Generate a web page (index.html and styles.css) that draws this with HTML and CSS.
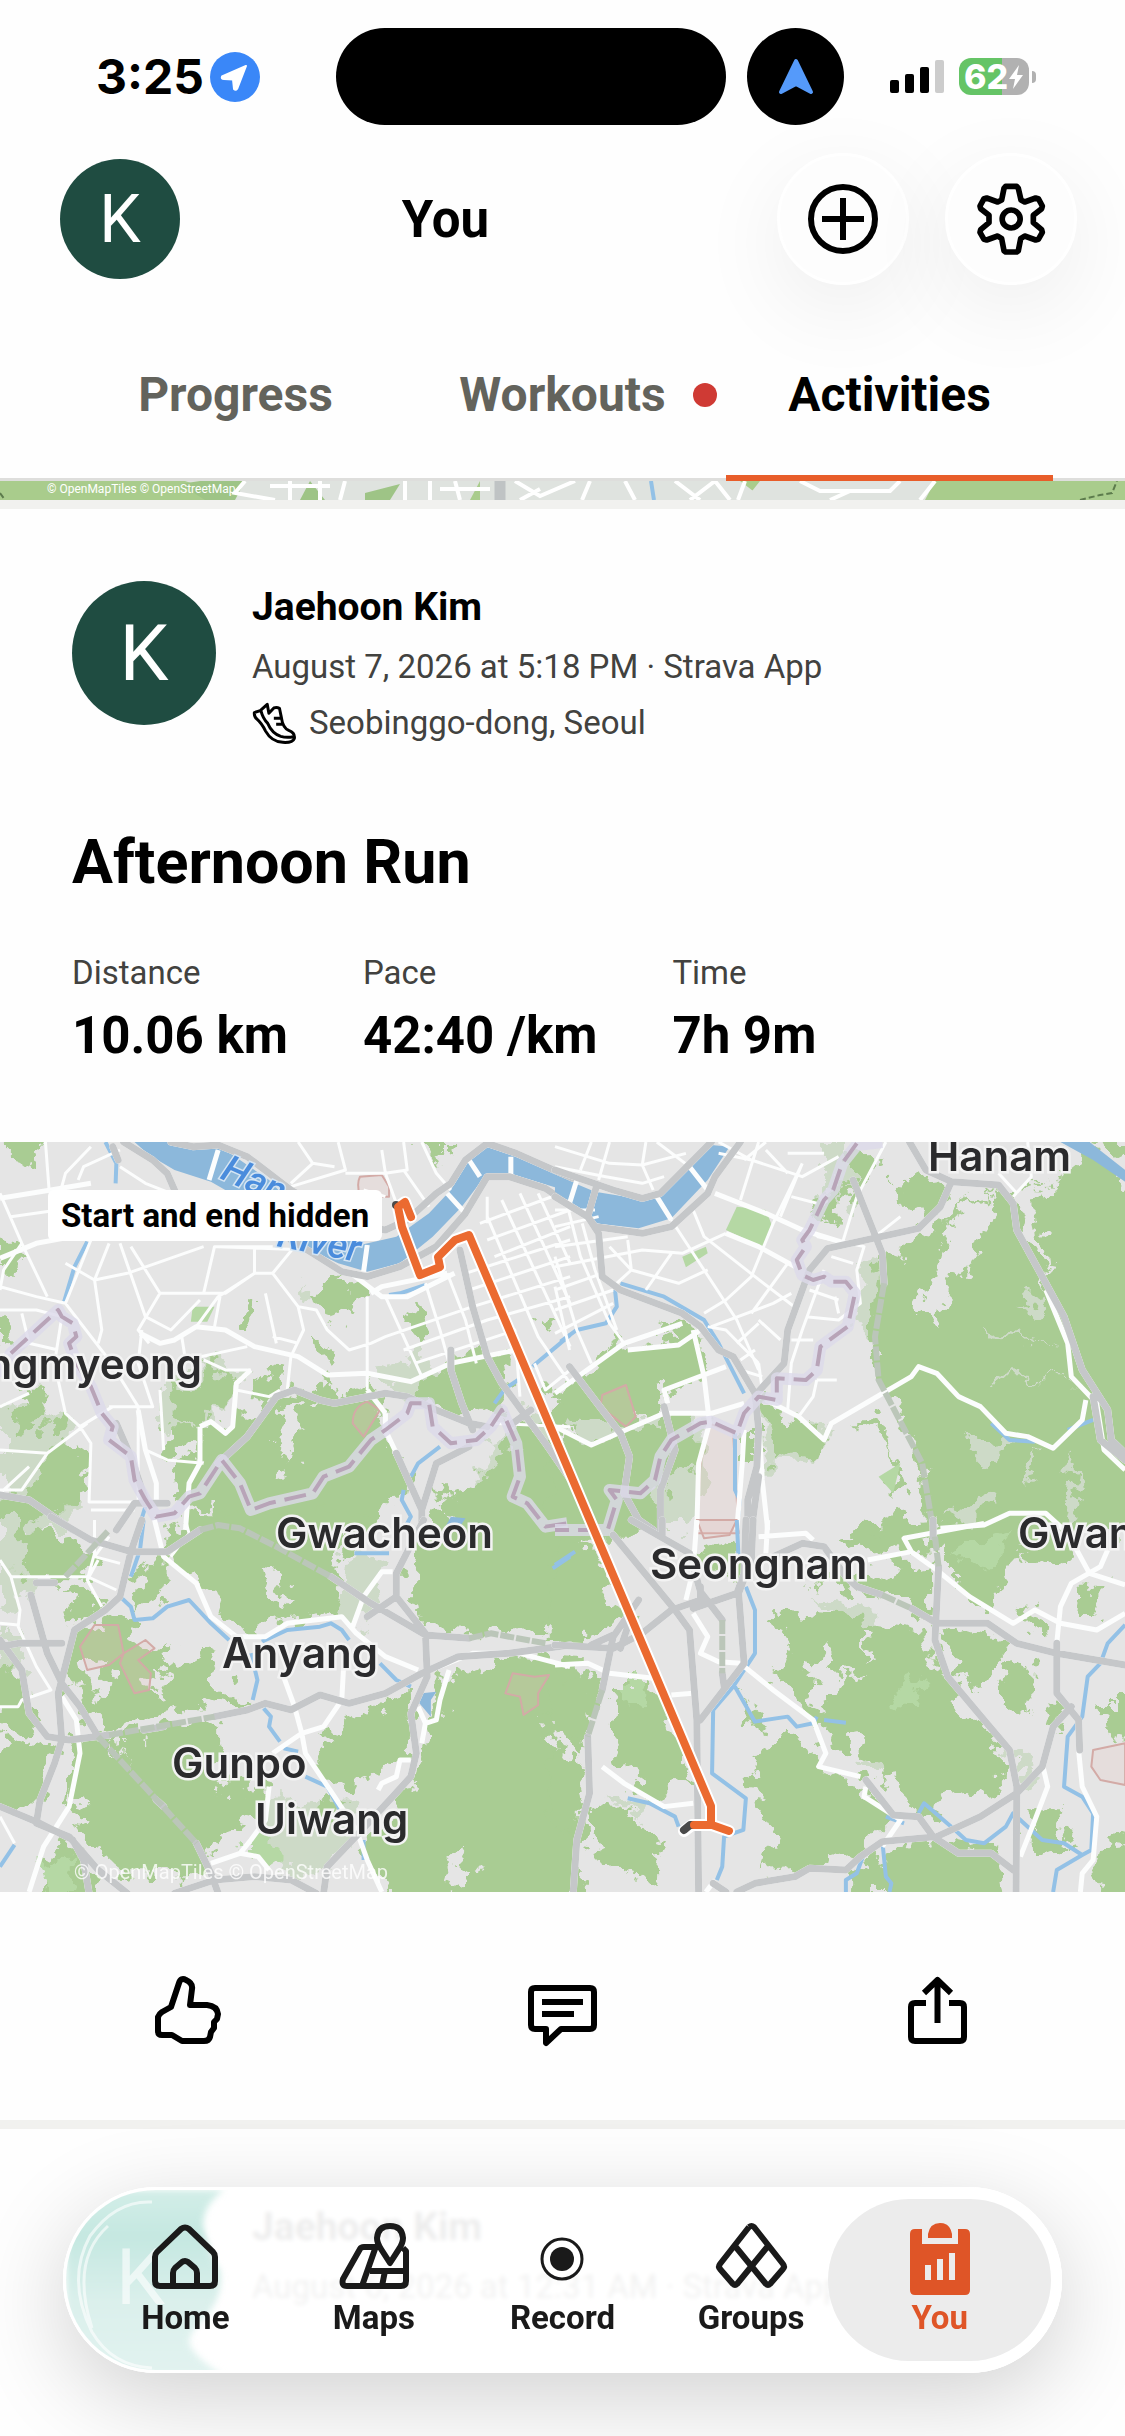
FILE: index.html
```html
<!DOCTYPE html>
<html lang="en">
<head>
  <meta charset="UTF-8">
  <title>You - Activities</title>
  <meta name="viewport" content="width=device-width, initial-scale=1.0">
  <link rel="stylesheet" href="styles.css">
</head>
<body>
  <!-- Status bar -->
  <div class="status-bar">
    <div class="status-left">
      <span class="status-time">3:25</span>
      <svg class="location-badge" viewBox="0 0 50 50">
        <circle cx="25" cy="25" r="25" fill="#3a87f8"/>
        <path d="M36 14 L12 24.500 Q11 27 14 27 L23 27.500 L24 37 Q26 39 27.500 36Z" fill="#fff" stroke="#fff" stroke-width="2" stroke-linejoin="round"/>
      </svg>
    </div>
    <div class="island"></div>
    <div class="island-dot">
      <svg viewBox="0 0 36 38" width="36" height="38"><path d="M18 3 L33 34 L18 26 L3 34Z" fill="#559afa" stroke="#559afa" stroke-width="4" stroke-linejoin="round"/></svg>
    </div>
    <div class="status-right">
      <svg class="signal" viewBox="0 0 54 34">
        <rect x="0" y="20" width="9" height="13" rx="2"/>
        <rect x="15" y="14" width="9" height="19" rx="2"/>
        <rect x="30" y="7" width="9" height="26" rx="2"/>
        <rect x="45" y="0" width="9" height="33" rx="2" fill="#ccc"/>
      </svg>
      <div class="battery">
        <span>62</span>
        <svg viewBox="0 0 16 26" width="16" height="26"><path d="M11 1 L1 15 H7 L5 25 L15 11 H9Z" fill="#fff"/></svg>
      </div>
    </div>
  </div>

  <!-- Header -->
  <header class="header">
    <div class="avatar avatar-small">K</div>
    <h1 class="page-title">You</h1>
    <button class="round-btn" aria-label="Add">
      <svg viewBox="0 0 72 72" width="72" height="72" fill="none" stroke="#000" stroke-width="6"><circle cx="36" cy="36" r="32"/><path d="M36 15V57M15 36H57"/></svg>
    </button>
    <button class="round-btn" aria-label="Settings">
      <svg viewBox="640 475 228 240" width="76" height="80" fill="none" stroke="#000" stroke-width="17" stroke-linejoin="round">
        <path d="M738 497H771L776 503L784 538L795 544L828 532L836 534L848 556L846 564L821 584V606L846 627L848 635L836 656L828 658L795 646L783 654L776 690L771 694H738L733 690L726 654L714 646L681 658L673 656L661 635L663 627L688 606V584L663 564L661 556L673 534L681 532L714 544L726 538L733 503Z"/>
        <circle cx="754.500" cy="595" r="27"/>
      </svg>
    </button>
  </header>

  <nav class="tabs">
    <a class="tab" href="#progress">Progress</a>
    <a class="tab" href="#workouts">Workouts<span class="tab-dot"></span></a>
    <a class="tab active" href="#activities">Activities</a>
  </nav>

  <main class="feed">
    <!-- Bottom edge of the previous activity map -->
    <div class="map-strip">
      <svg viewBox="0 0 1125 19" preserveAspectRatio="xMidYMid slice">
        <rect width="1125" height="19" fill="#a9cc8c"/>
        <path d="M185 0H480L470 19H230L215 10ZM480 0H740L765 19H480ZM760 0H935L925 19H745Z" fill="#dfe3df"/>
        <path d="M180 3L200 0H245L235 19H205ZM365 12L400 3 390 19H365ZM310 0L325 19H300Z" fill="#9ec486"/>
        <path d="M245 0L235 12 275 19M290 0V19M320 0V19M270 5H330M345 0L340 19M405 0V19M430 0V19M455 0L460 19M440 8H490M515 0L540 15 575 0M540 8L520 19M590 0L582 19M625 0L635 19M675 0L700 19M690 19L715 0 730 19M745 0L738 19M800 0L820 10H890L900 0M830 19L850 10M935 0L920 19" fill="none" stroke="#fff" stroke-width="4"/>
        <path d="M500 0V19" stroke="#bfc3c4" stroke-width="11"/>
        <path d="M651 0L654 19" stroke="#93c1e6" stroke-width="4"/>
        <path d="M0 12L5 19M1080 19L1100 14 1112 12 1117 0" fill="none" stroke="#5c7b4c" stroke-width="2" stroke-dasharray="6 3"/>
        <text class="strip-credit" x="47" y="12">© OpenMapTiles © OpenStreetMap</text>
      </svg>
    </div>

    <article class="activity">
      <div class="activity-head">
        <div class="avatar">K</div>
        <div class="activity-meta">
          <div class="athlete">Jaehoon Kim</div>
          <div class="meta-line">August 7, 2026 at 5:18 PM · Strava App</div>
          <div class="meta-line">
            <svg class="shoe" viewBox="38 34 134 130"><path d="M44 66L62 60 83 41 88 68 103 52Q112 49 120 53L126 82Q130 112 148 120 168 128 165 144 160 158 130 156 96 154 78 122 66 98 52 86 43 78 44 66ZM64 61Q70 84 84 98 98 130 124 138 142 143 162 139M103 83H124M110 101H130"/></svg>
            Seobinggo-dong, Seoul
          </div>
        </div>
      </div>
      <h2 class="activity-title">Afternoon Run</h2>
      <dl class="stats">
        <div class="stat"><dt>Distance</dt><dd>10.06 km</dd></div>
        <div class="stat"><dt>Pace</dt><dd>42:40 /km</dd></div>
        <div class="stat"><dt>Time</dt><dd>7h 9m</dd></div>
      </dl>
    </article>

    <!-- Route map, four tiles share one local grid -->
    <div class="map">
      <svg class="map-svg" viewBox="0 0 1125 750" preserveAspectRatio="xMidYMid slice">
        <defs>
          <filter id="rough" x="0" y="0" width="1" height="1">
            <feTurbulence type="fractalNoise" baseFrequency="0.045" numOctaves="4" seed="7"/>
            <feDisplacementMap in="SourceGraphic" scale="44" xChannelSelector="R" yChannelSelector="G"/>
          </filter>
        </defs>
        <rect width="1125" height="750" fill="#e5e5e5"/>

        <!-- woods -->
        <g filter="url(#rough)">
          <g transform="matrix(.3636 0 0 .3333 0 -12)">
            <path class="scrub" d="M0 830L90 800 200 900 200 1200H0ZM440 760L600 680 680 730 580 900 440 880ZM1040 730L1150 660 1200 740 1100 800ZM1260 1100L1460 830 1568 960V1200H1250ZM800 440L860 500 840 520Z"/>
            <path class="wood" d="M565 880L600 905 640 850 720 820 700 760 780 710 790 780 850 790 880 760 960 790 1010 770 1060 850 1060 900 1080 980 1130 1010 1100 1060 1095 1120 1040 1170 1030 1220H560L600 1130 500 1140 460 1080 470 1010 540 1000Z"/>
            <path class="wood" d="M1110 790L1250 690 1400 665 1410 760 1370 830 1300 870 1230 860 1180 800ZM1220 1090L1330 1040 1400 960 1430 870 1500 950 1600 1050V1220H1220L1240 1150ZM1480 860L1600 770V920L1540 900ZM0 550H35V650L0 665ZM0 320H80L50 365 85 410H0ZM30 30H120V80L60 105 30 95ZM60 770H130L120 850 70 930 30 940ZM100 1020L170 920 240 940 250 1020 180 1150H60ZM130 860H180L170 900H130ZM470 770H560L550 880 480 860ZM560 700L650 740 620 820 580 880 550 860ZM660 580L700 525 720 550 700 595ZM850 500L900 440 960 440 920 480 1010 490 980 530 930 570 880 550ZM1125 545L1175 560 1165 650 1145 640ZM865 590L900 640 925 720 880 700ZM1160 36H1230L1210 110 1190 70ZM460 880H540L560 970 460 960ZM1465 565H1530L1490 615ZM0 1120H90L100 1220H0Z"/>
            <path class="urban" d="M755 820H850L810 960 800 1030 770 1010Z"/>
          </g>
          <g transform="matrix(.3636 0 0 .3333 555 -12)">
            <path class="scrub" d="M50 860L340 870 420 860 380 1200H100ZM830 420L900 400 900 660 820 560ZM560 860L760 900 700 1010H560ZM740 30H800V220H740Z"/>
            <path class="wood" d="M905 380L960 340 1050 300 1080 240 1180 190 1240 180 1330 180 1420 130 1450 50 1600 180V1220H1040L1020 1010 960 900 900 780 880 700 880 560ZM940 140L1050 150 1070 220 1020 270 950 230ZM800 90L890 80 860 150 800 200ZM760 160H800L750 290 720 270ZM-20 800L80 710 190 640 340 570 390 620 410 740 300 780 300 830 190 890 50 860ZM-20 890L100 950 180 910 320 870 400 890 390 1000 300 1060 290 1220H-20ZM560 820L680 860 740 920 720 970 600 1000 580 900ZM820 850L900 850 930 1000 970 1100 930 1110 910 920ZM520 900H550V990H520ZM820 1180L960 1150V1220H820ZM1440 30H1600V110Z"/>
            <path class="urban" d="M1100 240L1210 190 1150 400 1080 440 1060 580 1000 530 1060 420ZM1270 200L1330 180 1350 470 1300 330ZM200 610L320 590 330 630 220 650Z"/>
            <path class="scrub" d="M1200 590L1380 640 1210 610ZM1180 730L1460 745 1190 745ZM1250 520L1350 500V560ZM1130 940L1260 930 1190 1000ZM1300 1000L1340 960 1310 1060ZM1050 1160L1200 1090 1200 1160ZM1420 960L1440 1160H1400Z"/>
          </g>
          <g transform="matrix(.3636 0 0 .3333 0 378)">
            <path class="scrub" d="M0 0H60L120 110 60 260H0ZM960 60L1060 120 1000 340 940 300ZM700 860L1000 840 900 1060H740ZM0 330H60V480H0Z"/>
            <path class="wood" d="M-20 430L60 470 70 560 110 640 60 640-20 620ZM200 330L320 300 420 390 480 370 430 430 580 400 600 480 680 560 560 540 400 590 290 640 200 520 180 440ZM470 20L550-20 1000-20 900 150 960 220 950 300 880 280 760 300 680 340 600 280 540 180 450 110ZM1150 50L1230-30H1600V340L1300 330 1180 320 1120 240 1120 160ZM290 650L600 600 600 680 570 740 620 810 720 760 740 790 720 880 600 970 540 1060 400 800ZM220 650L290 660 540 970 560 1060 350 1060 240 960 180 860ZM880 620L1050 560 1130 520 1130 700 1050 760 960 810 870 720 920 660ZM1200 480L1400 410 1600 420V1140H1070L1000 980 1150 770 1160 680 1210 600ZM170 950L260 1060 240 1140H90L150 1000ZM-20 680L80 660 140 700 100 860-20 850ZM60 20L200 60 270 90 240 180 60 170ZM380 150L450 110 450 220 370 290ZM880 840L940 860 900 900ZM160 200L300 240 200 310Z"/>
            <path class="urban" d="M720 160L780 170 800 250 740 230ZM230 440L320 420 260 540ZM420 470L480 440 440 540ZM1490 590L1600 700V800L1540 720ZM200 810L260 850 200 870ZM1260 990L1310 1060 1210 1116Z"/>
            <path class="lime" d="M690 960H755V1040L670 1010ZM120 1040L200 1010 190 1116H120Z"/>
          </g>
          <g transform="matrix(.3636 0 0 .3333 555 378)">
            <path class="scrub" d="M700 230L900 260 880 360 760 300ZM1240 680L1330 700 1280 800ZM830 720L920 700 870 760ZM940 740L1020 760 1030 850 960 820ZM150 820L260 840 240 900Z"/>
            <path class="wood" d="M-20 100L90 60 200 300 100 360-20 370ZM-20 450L130 470 80 650-20 660ZM160 480L270 480 370 780 280 830 180 760 150 640ZM-20 680L60 700 80 840 40 930-20 910ZM80 850L180 860 290 960 280 1080 190 1050 100 1000ZM590 280L820 300 1040 340 1050 420 1120 560 1240 690 1240 800 1000 880 900 780 850 670 760 680 700 580 590 500 650 400ZM560 700L640 640 740 700 720 740 860 800 920 900 820 1010 700 1050 560 1060 600 940 540 830ZM700 190L1040 120 1040 280 860 210ZM1070-10H1280V130L1180 260 1070 170ZM750 60L860 20 1040 10 1040 80 860 110ZM1060 310L1270 380 1200 440 1180 520 1090 460ZM1235 440L1310 430 1310 570 1245 560ZM820 1030L1050 960 1230 1010 1250 1140H820ZM1500 540H1600V660L1520 640ZM1290 880L1400 880 1430 980 1300 1010ZM1500 980L1600 940V1140H1480ZM1280 250L1380 300 1360 350 1290 320ZM1350 550L1410 560 1370 620ZM500 520L580 590 540 620ZM1270 40L1410 50 1410 130 1290 110ZM1430 200L1500 200 1500 300 1420 300ZM380 120L500 60 490 180Z"/>
            <path class="urban" d="M760 360L790 460 720 560 700 500ZM700 440L860 470 700 480ZM850 320L880 340 850 440Z"/>
            <path class="lime" d="M940 500L1000 450 990 560 950 550ZM180 480L250 480 260 540 190 560ZM1100 100L1240 40 1230 110 1180 150Z"/>
          </g>
        </g>

        <!-- streets, water and highways -->
        <g class="tile" transform="matrix(.3636 0 0 .3333 0 -12)">
          <path class="river" d="M370 36H510L620 60 740 150 800 220 900 300 990 345 1090 320 1180 250 1240 180 1290 90 1340 50 1420 80 1580 150V190L1400 130H1340L1270 230 1190 320 1100 400 1010 425 930 400 800 330 700 230 580 155 480 120 410 75Z"/>
          <path class="stream" d="M290 36L320 100 318 160M240 335L205 410 175 520M1568 615L1530 650 1475 700 1465 710M1425 750L1390 775 1360 820M1070 495L1100 490 1170 465M1210 950L1150 1000 1130 1040M1110 1080L1105 1110 1130 1160 1110 1200M400 1130L380 1200"/>
          <path class="water" d="M1240 1160L1280 1165 1265 1190H1225Z"/>
          <path class="pink" d="M990 140L1050 135 1070 170V200H990Q980 160 990 140ZM1010 815L1045 840 1000 920 970 880Q970 830 1010 815Z"/>
          <path class="park" d="M530 530H590L570 575H525Z"/>
          <path class="street wide" d="M0 205L140 180 250 160M0 385L100 340 200 320M385 610L440 640 480 630 540 590 620 600 700 650 820 680 900 735 1010 730 1130 755 1240 700 1420 660M600 60L575 150M1010 345L1000 425M1290 90L1320 140M1405 80V140M1230 190L1280 250M1020 490L1050 470 1230 430M1060 850L1060 900 1090 970M1060 850L1010 780M550 890L580 875 620 910 640 890 650 760 690 720M550 890V1000L520 1060 510 1200M380 840L400 960 430 1060V1120M960 425L1050 500 1120 500 1250 430"/>
          <path class="street" d="M125 36L135 180M0 190L60 340 130 500M30 260L160 240 300 220M170 170L180 130 250 50M215 150L230 110 330 60M330 110L400 160 470 190M0 470L100 500 180 520M0 540H100L170 560M60 340L10 420 0 480M250 330L180 520M360 350L440 490H560L590 350H750M440 490L380 600 410 640M300 340L260 450 280 600 270 640M330 340L400 560 470 600 550 510M180 400L260 450 350 430 560 350M700 350V430L600 500 540 590M560 490L620 490 700 430 750 430 810 350M750 430L820 530 835 600 800 680 790 780M820 530L870 540 900 600 960 660 1020 640 1060 620M600 350L850 360M605 500L590 590M730 490L760 640M750 620L820 640M500 620L510 690 680 650M170 560L150 700 180 850 220 890 250 940 245 1116H400M0 960L130 970 240 880M130 970L60 1080 0 1080M180 520L300 690 380 830V1116M300 830L420 830 380 700 390 600M220 890L310 830M400 960L460 990 560 1000M440 780L450 960M250 1140L370 1140M560 690L620 720 690 720M650 780L740 800 770 780M1010 500V780M800 170L950 120 930 36M950 130H1060L1050 60M1060 130L1120 120 1110 36M820 36L860 100 800 160M860 100L920 110M1110 120L1180 230M1160 36L1200 130 1240 180M1060 130L1090 220M1060 500L1110 620 1160 740M1170 460L1210 600 1240 720M1230 430L1280 570 1310 700M1060 620L1300 530 1568 440M1110 660L1340 570 1568 500M1140 700L1420 600M1280 430L1568 330M1290 480L1568 380M1340 260L1480 620 1568 760M1380 210L1568 650M1430 190L1568 520M1480 190L1568 400M1320 280L1568 180M1340 330L1568 240M1360 380L1568 290M1420 660L1430 800M1340 200V280M1470 700L1500 780 1568 720M1350 880L1568 890M0 680L80 640 160 660M80 1010L0 1090M0 830L80 790M60 550L80 640M1000 180L1060 200"/>
          <path class="highway" d="M340 36L420 90 460 130 480 180M470 36L530 50 600 45 680 80 740 130 800 180 880 230 1000 290 1060 300 1120 270 1200 190 1240 160 1280 90 1340 40 1420 70 1575 145M800 330L860 370 940 425 1010 440 1100 410 1200 350 1280 250 1340 140 1400 140 1500 175 1575 230M1265 360L1300 530 1340 680 1380 760 1440 850 1500 940 1570 1050M1240 660V720L1270 820 1300 900M600 1000L680 920 760 800 810 780 880 810 920 820 1060 790 1120 800 1200 840 1290 880 1340 890M0 1095L80 1110 200 1200M320 1200L370 1120 460 1120M320 880L360 980 400 1110M1090 970L1160 1140V1200M1160 1140L1200 1000 1290 950M1410 880L1460 840M310 50L325 90"/>
          <path class="border-halo" d="M0 740L30 670 100 600 160 540 170 560 200 580 210 620 190 640 210 700 250 770 280 850 310 890 300 930 360 980 370 1050 400 1110 430 1160 480 1150 520 1100 550 1090 610 990 660 1060 690 1140 740 1120 860 1090 890 1040 960 1010 1020 930 1060 900 1120 850 1130 820 1180 820 1190 890 1240 940 1310 930 1350 890 1380 840 1420 940 1430 1040 1410 1100 1450 1120 1500 1190 1560 1180"/>
          <path class="border" d="M30 670L100 600 160 540 170 560 200 580 210 620 190 640 210 700 250 770 280 850 310 890 300 930 360 980 370 1050 400 1110 430 1160 480 1150 520 1100 550 1090 610 990 660 1060 690 1140 740 1120 860 1090 890 1040 960 1010 1020 930 1060 900 1120 850 1130 820 1180 820 1190 890 1240 940 1310 930 1350 890 1380 840 1420 940 1430 1040 1410 1100 1450 1120 1500 1190 1560 1180"/>
        </g>
        <g class="tile" transform="matrix(.3636 0 0 .3333 555 -12)">
          <path class="river" d="M0 135L110 185 250 210 300 190 380 100 430 45 480 50 420 150 320 265 230 295 110 280 90 250 0 185ZM1390 36H1470L1568 120V155L1480 90Z"/>
          <path class="pink" d="M425 880L490 910 505 1210H390L400 1000ZM195 765L222 860 195 890 125 830 130 795Z"/>
          <path class="park" d="M500 230L580 240 598 290 570 350 470 300ZM350 380L415 350 420 370 360 412ZM890 1040L950 1000 930 1090Z"/>
          <path class="stream" d="M180 460L300 500 410 570 450 640 520 790M165 480L170 530 140 580 60 600 15 635M495 910V1080L508 1110 500 1200M1200 880L1250 930 1320 935M1410 900L1480 870"/>
          <path class="street wide" d="M440 190L580 250 680 300 800 340M470 310L560 350 660 410M60 150L40 220M280 200L320 270M370 110L420 180M0 890L100 945 300 850 430 850 520 820M380 600L410 740 425 880 395 1000 390 1200M0 790L190 640 350 580M200 660L340 645 400 600M580 810L670 860 740 930 760 880 870 810 980 740 1000 710 1050 730 1110 800 1170 830 1240 910 1300 920 1370 955 1450 870 1460 810M520 900L515 1000 500 1200M560 860L570 1050 585 1200M1350 480L1410 640 1420 740 1490 820 1510 960 1568 1020M1060 1195L1180 1185 1250 1150 1350 1150 1400 1200M310 820L300 780 470 710"/>
          <path class="street" d="M0 50L150 100 240 105 360 70M0 110L140 140 240 160 300 140M100 36L70 120M150 36L120 150M250 36L240 105 270 180M280 36L370 110M0 240H110M0 290L120 260M0 350L200 320M0 410L240 360 350 370 470 310M0 480L130 430M0 540L160 480M0 610L160 520M30 210L70 380 150 580 190 640M75 280L110 420 170 600M0 380L60 600 100 700M0 470L40 660M150 350L210 420 190 440 160 470M200 330L210 420 340 460 420 420M320 370L250 480M320 270L410 420 500 570 560 720M380 240L410 320 550 440 670 540M410 550L470 510 540 440 600 280 680 100M540 550L640 400M430 590L600 520 650 490M500 640L560 580M560 700L470 600 420 590M510 690L550 660M570 740L510 720M560 570L620 630M520 90L580 36M510 210L560 36M450 70L540 90 680 140 780 80M640 70H740M620 260L680 100M650 200L720 220M830 200L910 36M790 340L830 200M720 320L850 350 830 420 840 520 780 570 690 560M760 380L820 400M740 420L680 600 650 700 640 840M700 480L780 510M770 500L780 550M650 630H710M720 750H775M720 750L710 800 670 860M560 700L570 780M1260 200L1310 140 1300 36M1220 130L1270 190M580 60L640 130M450 36L540 90M880 320L950 260"/>
          <path class="highway" d="M0 120L160 180 240 205 290 190 430 36M0 200L90 260 110 290 240 310 320 290 420 190 440 140 510 36M115 165L90 260 120 310 130 440 180 480 350 550 400 590 450 660 490 680 550 790 560 900 555 1010 530 1110 530 1200M540 1200L560 1040M555 790L630 700 640 600 700 420 750 355 1000 295 1060 230 1090 155 1220 165 1260 220 1270 300 1400 560 1450 720 1520 840 1530 930 1568 970M975 36L1020 120 1090 155M1480 800L1500 930 1568 990M820 150L900 370 905 460M40 710L130 840 180 910 205 980 190 1090 230 1170 270 1200M300 830L330 960 290 1080 290 1200"/>
          <path class="tunnel" d="M905 460L880 620 890 750 1010 1000 1040 1200"/>
          <path class="border-halo" d="M900 36L830 45 790 100 765 180 740 210 700 300 680 330 690 350 665 390 680 435 710 450 740 440 760 455 800 455 825 490 805 590 730 650 720 720 690 750 610 745 610 810 560 800 520 850 500 910 430 875 400 880 320 930 290 980 275 1050 235 1090 150 1080 170 1110 145 1200 0 1200"/>
          <path class="border" d="M830 40L790 100 765 180 740 210 700 300 680 330 690 350 665 390 680 435 710 450 740 440 760 455 800 455 825 490 805 590 730 650 720 720 690 750 610 745 610 810 560 800 520 850 500 910 430 875 400 880 320 930 290 980 275 1050 235 1090 150 1080 170 1110 145 1200 0 1200"/>
        </g>
        <g class="tile" transform="matrix(.3636 0 0 .3333 0 378)">
          <path class="pink" d="M260 315H325L340 400 300 435 240 450 220 380ZM340 400L400 360 425 385 380 420 415 460 410 510 370 520 330 430ZM1410 460L1470 470 1510 465 1480 520V555L1440 585 1430 530 1390 520Z"/>
          <path class="stream" d="M395 0L385 90 360 170M335 235L360 260 370 300 420 295 460 260 520 240 580 310 630 360M720 365L790 330 880 320 910 310 940 330 960 360M690 400L708 480 695 540M725 565L745 590 740 620 770 665M780 685L820 695M840 770L900 800 935 870M1045 430L1090 480 1130 500M975 100H1070M1520 145L1568 110M40 975L0 1040M1000 960V1020"/>
          <path class="water" d="M1160 520L1200 515 1185 540V590L1150 545Z"/>
          <path class="street wide" d="M425 0L450 110 540 190 580 290 650 350H730L790 310 940 290 980 340 1060 410 1150 450M780 470L810 560 830 640 840 700 920 830 980 930 1010 1020 1050 1116M945 440L940 540 890 620 830 640 750 700M740 800L730 900 690 960 660 1000 580 1030M660 1000L710 1010 740 1050M1080 155H1050L1000 230 970 320M170 530L210 600 220 700 190 860 120 980 80 1116M1160 460L1300 400 1430 400 1568 440M1235 450L1210 540 1200 600 1170 610 1160 670M1150 560L1170 610M1130 720H1100L1090 770 1050 790 1040 810"/>
          <path class="street" d="M0 120L30 170H240L320 210M30 170L55 270 50 320 100 440 140 510 60 540 50 560H0M0 310L50 315M260 0V100L240 180 280 260M300 50L260 110 330 130M510 0L520 40 470 110M0 890L40 970M240 180L270 120"/>
          <path class="highway" d="M140-10L250 60 360 95 460 95 550 30M390 0L360 95 330 230 290 270 205 330 160 520 170 660 150 730 110 840 100 910 190 950 270 1050 350 1120M85 225L130 400 170 490 220 560 270 650M0 380L50 370H170M0 360L60 450 80 580 130 650 190 660 300 645M0 860L110 910 200 960 230 1020 245 1120M590 590L680 570 730 550 800 570 880 525 960 550 1060 520 1160 460 1260 410 1400 400 1568 375M910 170L1020 250 1170 345 1290 355M1165 0L1090 160V230L1170 340 1175 470 1130 580 1145 700 1130 770 1080 830 970 960 900 1040 890 1120M1010 290L1090 230M540 970L580 1060 600 1120M480 1120L590 1080 700 1070 800 1080 870 1120M100 188H150M430 840L450 860M395 630L450 620"/>
          <path class="tunnel" d="M550 30L600 15 660 25 760 80 910 170M300 645L590 590M270 650L440 850 540 970M180 170L300 30M1290 355L1350 340 1500 370"/>
        </g>
        <g class="tile" transform="matrix(.3636 0 0 .3333 555 378)">
          <path class="pink" d="M390 0H500L480 45 410 55ZM1568 670L1480 690 1475 740 1500 780 1568 795Z"/>
          <path class="stream" d="M500 0L505 120M525 200L550 270V400L490 500 435 570 432 760 525 835 518 930 465 950 460 1040 445 1080M495 500L550 605 640 590 665 620 710 610 720 590M740 600L800 608M0 135L55 95M200 835L260 850 330 890 340 920M850 1000L830 1060 800 1080V1116M900 960L910 1070 925 1090 920 1116M1000 880L1015 850 1100 930 1130 960 1180 970 1240 920 1260 880 1340 960 1400 970 1450 1005 1380 1050 1370 1116M1568 315L1520 370 1500 430 1465 470 1450 590 1410 650 1400 800 1450 830 1480 880 1475 990 1450 1005M910 890L960 910"/>
          <path class="street wide" d="M0 435L90 430 150 460 270 475M320 525L380 520M380 280L420 350 400 400 450 425 510 430 600 510 710 600 745 700 725 740 840 770M390 0L380 150 360 240M560 50L690 40 710 60M585 0L580 100M860 120L980 95 1050 150 1140 230 1260 310 1320 270 1390 310 1490 330 1568 280M980 95L960 55 1180 10M1380 370L1390 260 1420 190 1500 140 1520 90M1420 60L1470 160 1568 195M130 740L190 790 300 860 380 850M855 800L850 830 950 900 900 980M1340 730L1355 800 1320 900 1280 1010M1440 690L1450 800 1490 890 1480 1020 1450 1060 1445 1116M415 1116L440 1080"/>
          <path class="highway" d="M0 375L160 385 240 340 320 270 400 240 400 200M160 345L100 375M200 320L180 385M230 240L160 350 130 510M90 650L95 820 60 960 50 1120M160 45L330 270 370 330 390 600 395 1120M210 0L290 50 370 100 400 215 460 300M295 0V50M525 0L520 160 500 220 380 265M545 0L540 120 505 220 520 430 400 600M460 460L465 500M600 110L680 70 740 80 800 170 830 200 900 225M980 265L1050 310H1190L1270 370 1380 400 1568 435M1055 140L1045 360 1080 470 1180 600 1250 690 1270 800 1268 1120M1380 370V520L1440 600 1443 690M1420 560L1370 620 1340 740 1270 820 1170 890 1050 950 900 965 840 1010 800 1050 700 1045 660 1070 550 1090 500 1116M855 780L930 885 1000 890 1040 950 1110 1000H1200L1260 1050M1040 0V50M435 1090L470 1116"/>
          <path class="tunnel" d="M130 510L90 650M460 300V460M900 225L980 265M1045 50L1055 140"/>
        </g>

        <!-- place names -->
        <g class="place">
          <text x="202" y="237" text-anchor="end">Gwangmyeong</text>
          <text x="928" y="29">Hanam</text>
          <text x="276" y="406">Gwacheon</text>
          <text x="650" y="437">Seongnam</text>
          <text x="1018" y="406">Gwangju</text>
          <text x="222" y="526">Anyang</text>
          <text x="172" y="636">Gunpo</text>
          <text x="255" y="692">Uiwang</text>
        </g>
        <g class="river-name">
          <text transform="translate(219 36) rotate(24)">Han</text>
          <text transform="translate(276 104) rotate(11)">River</text>
        </g>

        <!-- recorded route -->
        <path class="route-halo" d="M411 75L405 60 398 65 402 85 420 133 440 125 438 115 455 98 469 93 711 664V683M684 689L692 683H712L729 689"/>
        <circle cx="396" cy="63" r="4" fill="#4a4a4a"/>
        <path class="route-hidden" d="M684 688L690 683H700"/>
        <path class="route" d="M411 75L405 60 398 65 402 85 420 133 440 125 438 115 455 98 469 93 711 664V683M694 683H712L729 689"/>
        <text class="map-credit" x="74" y="737">© OpenMapTiles © OpenStreetMap</text>
      </svg>
      <div class="map-label">Start and end hidden</div>
    </div>

    <div class="actions">
      <button class="action" aria-label="Give kudos">
        <svg viewBox="0 0 75 80" width="75" height="80"><path d="M8 47Q9 44 12 42L21 37 29 13Q31 7 36 10 43 13 42 19L40 35H57Q67 36 68 44L67 49 64 52V58L61 62 60 67Q59 71 54 71H32L22 65H12Q8 65 8 61Z"/></svg>
      </button>
      <button class="action" aria-label="Comment">
        <svg viewBox="0 0 77 80" width="77" height="80"><path d="M11 18H66Q70 18 70 22V55Q70 59 66 59H37L22 73V59H11Q7 59 7 55V22Q7 18 11 18ZM18 32H59M18 44H50"/></svg>
      </button>
      <button class="action" aria-label="Share">
        <svg viewBox="0 0 75 80" width="75" height="80"><path d="M26 33H15Q11 33 11 37V67Q11 71 15 71H60Q64 71 64 67V37Q64 33 60 33H49M37.500 53V11M24 23L37.500 10 51 23"/></svg>
      </button>
    </div>

    <article class="activity next">
      <div class="activity-head">
        <div class="avatar">K</div>
        <div class="activity-meta">
          <div class="athlete">Jaehoon Kim</div>
          <div class="meta-line">August 6, 2026 at 12:31 AM · Strava App</div>
        </div>
      </div>
    </article>
  </main>

  <!-- Bottom navigation -->
  <nav class="bottom-nav">
    <div class="glass">
      <svg viewBox="0 0 240 186" width="240" height="186">
        <defs>
          <linearGradient id="mint" x1="0" y1="0" x2="0" y2="1">
            <stop offset="0" stop-color="#d3eee8"/>
            <stop offset=".25" stop-color="#c5e8e1"/>
            <stop offset=".6" stop-color="#dbf0ec"/>
            <stop offset="1" stop-color="#e2f3f0"/>
          </linearGradient>
        </defs>
        <path class="mint-blob" d="M0 0H158Q138 14 137 34 142 66 154 80 158 110 136 130 124 142 123 152 126 166 158 186H0Z" fill="url(#mint)"/>
        <path d="M86 12Q50 10 24 46 0 90 26 142 46 176 86 178M42 36Q4 70 26 138" fill="none" stroke="#fff" stroke-opacity=".6" stroke-width="3"/>
        <text x="50" y="114">K</text>
      </svg>
    </div>
    <a class="nav-item" href="#home">
      <svg viewBox="0 0 72 78" width="72" height="78"><path d="M6 37Q6 34 8 32L32 9Q36 6 40 9L64 32Q66 34 66 37V61Q66 66 61 66H11Q6 66 6 61ZM24 66V53Q24 50 26 48L33 42Q36 40 39 42L46 48Q48 50 48 53V66"/></svg>
      <span>Home</span>
    </a>
    <a class="nav-item" href="#maps">
      <svg viewBox="0 0 76 78" width="76" height="78"><path d="M42 27H28Q25 27 24 29L7 59Q5 66 11 66H65Q70 66 70 61V31L67 28M39 29L26 66M34 51H70M49 51L46 66M54 43L45 29Q41 23 41 18 42 6 54 6 66 6 67 18 67 23 63 29Z"/></svg>
      <span>Maps</span>
    </a>
    <a class="nav-item" href="#record">
      <svg viewBox="0 0 72 78" width="72" height="78"><circle cx="36" cy="39" r="20" stroke-width="3"/><circle cx="36" cy="39" r="12" fill="#1a1a1a" stroke="none"/></svg>
      <span>Record</span>
    </a>
    <a class="nav-item" href="#groups">
      <svg viewBox="0 0 77 78" width="77" height="78"><path d="M36 7Q38.500 5 41 7L70 44Q72 46.500 70 49L57 64Q55 66 53 64L22 26M55 26L24 64Q22 66 20 64L7 49Q5 46.500 7 44L36 7"/></svg>
      <span>Groups</span>
    </a>
    <a class="nav-item active" href="#you">
      <svg viewBox="0 0 72 78" width="72" height="78"><path d="M11 9H18V24H54V9H61Q66 9 66 14V70Q66 75 61 75H11Q6 75 6 70V14Q6 9 11 9ZM24 18V14Q26 3 36 3 46 3 48 14V18ZM21 45V60H27V45ZM33 39V60H39V39ZM45 33V60H51V33Z" fill-rule="evenodd"/></svg>
      <span>You</span>
    </a>
  </nav>
</body>
</html>
```
FILE: styles.css
```css
:root {
  --orange: #e85d2a;
  --green: #1f4c41;
  --text: #000;
  --text-secondary: #42423f;
  --muted: #63635c;
  --divider: #f1f1ef;
}
* {
  box-sizing: border-box;
}
body {
  font-family: Roboto, "Liberation Sans", sans-serif;
  background: #fefefe;
  margin: 0;
  color: var(--text);
  min-height: 100vh;
  display: flex;
  flex-direction: column;
}
button {
  border: none;
  background: none;
  padding: 0;
  cursor: pointer;
}
a {
  text-decoration: none;
  color: inherit;
}

/* Status bar */
.status-bar {
  display: flex;
  align-items: center;
  height: 153px;
}
.status-left {
  flex: 1;
  display: flex;
  align-items: center;
  gap: 6px;
  padding-left: 96px;
}
.status-time {
  font-family: Inter, sans-serif;
  font-weight: 700;
  font-size: 48px;
}
.location-badge {
  width: 50px;
  height: 50px;
}
.island {
  width: 390px;
  height: 97px;
  border-radius: 49px;
  background: #000;
}
.island-dot {
  width: 97px;
  height: 97px;
  margin-left: 21px;
  border-radius: 50%;
  background: #000;
  display: flex;
  align-items: center;
  justify-content: center;
}
.status-right {
  width: 281px;
  padding-left: 46px;
  display: flex;
  align-items: center;
  gap: 15px;
}
.signal {
  width: 54px;
  height: 34px;
}
.battery {
  position: relative;
  width: 70px;
  height: 37px;
  border-radius: 12px;
  background: linear-gradient(90deg, #65c466 62%, #b1b1b1 62%);
  color: #fff;
  font-family: Inter, sans-serif;
  font-weight: 800;
  font-size: 34px;
  display: flex;
  align-items: center;
  justify-content: center;
}
.battery::after {
  content: "";
  position: absolute;
  right: -7px;
  top: 13px;
  width: 4px;
  height: 12px;
  border-radius: 0 4px 4px 0;
  background: #b1b1b1;
}

/* Header */
.header {
  display: flex;
  align-items: center;
  gap: 36px;
  height: 132px;
  padding: 0 48px 0 60px;
}
.avatar {
  flex: none;
  width: 144px;
  height: 144px;
  border-radius: 50%;
  background: var(--green);
  color: #fff;
  font-size: 78px;
  display: flex;
  align-items: center;
  justify-content: center;
}
.avatar-small {
  width: 120px;
  height: 120px;
  font-size: 66px;
}
.page-title {
  flex: 1;
  margin: 0;
  padding-right: 66px;
  text-align: center;
  font-size: 51px;
  font-weight: 700;
}
.round-btn {
  width: 132px;
  height: 132px;
  border-radius: 50%;
  border: 3px solid #fff;
  background: #fdfdfd;
  box-shadow: 0 24px 90px rgba(0,0,0,0.07);
  display: flex;
  align-items: center;
  justify-content: center;
}

/* Tabs */
.tabs {
  display: flex;
  padding: 0 72px;
  border-bottom: 3px solid #dededc;
}
.tab {
  position: relative;
  flex: 1;
  padding: 81px 0 55px;
  text-align: center;
  font-size: 48px;
  line-height: 57px;
  font-weight: 700;
  color: var(--muted);
}
.tab.active {
  color: var(--text);
}
.tab.active::after {
  content: "";
  position: absolute;
  left: 0;
  right: 0;
  bottom: -3px;
  height: 6px;
  background: var(--orange);
}
.tab-dot {
  position: absolute;
  top: 98px;
  right: 9px;
  width: 24px;
  height: 24px;
  border-radius: 50%;
  background: #cf3a34;
}

/* Feed */
.feed {
  flex: 1;
  display: flex;
  flex-direction: column;
}
.map-strip {
  border-bottom: 9px solid var(--divider);
}
.map-strip svg {
  display: block;
  width: 100%;
  height: 19px;
}
.strip-credit {
  font-size: 12px;
  fill: #fff;
}
.activity {
  padding: 72px 72px 76px;
}
.activity-head {
  display: flex;
  align-items: flex-start;
  gap: 36px;
}
.athlete {
  font-size: 39px;
  line-height: 52px;
  font-weight: 700;
  margin-bottom: 6px;
}
.meta-line {
  display: flex;
  align-items: center;
  gap: 12px;
  font-size: 33px;
  line-height: 56px;
  color: var(--text-secondary);
}
.shoe {
  width: 45px;
  height: 43px;
  fill: none;
  stroke: #000;
  stroke-width: 9;
  stroke-linejoin: round;
}
.activity-title {
  margin: 75px 0 55px;
  font-size: 61px;
  line-height: 72px;
  font-weight: 700;
}
.stats {
  display: flex;
  gap: 75px;
  margin: 0;
}
.stat dt {
  font-size: 33px;
  line-height: 40px;
  color: var(--text-secondary);
}
.stat dd {
  margin: 13px 0 0;
  font-size: 51px;
  line-height: 60px;
  font-weight: 700;
}

/* Map */
.map {
  position: relative;
}
.map-svg {
  display: block;
  width: 100%;
  height: 750px;
}
.wood { fill: #a9cc93; }
.scrub { fill: #cddac7; }
.urban { fill: #e5e5e5; }
.lime, .park { fill: #b5d8a4; }
.river, .water { fill: #8cb8db; }
.pink {
  fill: #e6bdb833;
  stroke: #d3aaa6;
  stroke-width: 2;
}
.tile path {
  vector-effect: non-scaling-stroke;
  stroke-linejoin: round;
}
.stream, .street, .highway, .tunnel, .border, .border-halo {
  fill: none;
}
.stream {
  stroke: #93c1e6;
  stroke-width: 4;
}
.street {
  stroke: #fcfdfd;
  stroke-width: 3;
}
.street.wide {
  stroke-width: 5;
}
.highway {
  stroke: #c5c7c9;
  stroke-width: 7;
  stroke-linecap: round;
  filter: drop-shadow(0 0 2px #fff);
}
.tunnel {
  stroke: #bbc6b9;
  stroke-width: 6;
  stroke-dasharray: 14 2;
}
.border-halo {
  stroke: #dcdaea;
  stroke-opacity: 0.8;
  stroke-width: 12;
}
.border {
  stroke: #b8a4b8;
  stroke-width: 4;
  stroke-dasharray: 22 9;
}
.place {
  font-family: Inter, sans-serif;
  font-size: 42px;
  font-weight: 600;
  fill: #2b2b2d;
  stroke: #f3f3f3;
  stroke-width: 5;
  paint-order: stroke;
}
.river-name {
  font-size: 38px;
  font-style: italic;
  font-weight: 500;
  fill: #4a8cdc;
  stroke: #d5e5f3;
  stroke-width: 3;
  paint-order: stroke;
}
.route, .route-halo, .route-hidden {
  fill: none;
  stroke-linejoin: round;
  stroke-linecap: round;
  stroke: #eb6a30;
  stroke-width: 8;
}
.route-halo {
  stroke: #fff;
  stroke-width: 12;
}
.route-hidden {
  stroke: #4a4a4a;
}
.map-credit {
  font-size: 20px;
  fill: #fff;
  fill-opacity: 0.8;
}
.map-label {
  position: absolute;
  top: 48px;
  left: 48px;
  padding: 0 13px;
  border-radius: 6px;
  background: #fff;
  font-size: 33px;
  line-height: 51px;
  font-weight: 700;
}

/* Actions */
.actions {
  display: flex;
  padding: 78px 0 70px;
  border-bottom: 9px solid var(--divider);
}
.action {
  flex: 1;
  display: flex;
  justify-content: center;
}
.action svg {
  fill: none;
  stroke: #000;
  stroke-width: 6;
  stroke-linejoin: round;
}
.next {
  flex: 1;
  padding-bottom: 0;
}

/* Bottom navigation */
.bottom-nav {
  position: fixed;
  left: 63px;
  right: 63px;
  bottom: 63px;
  height: 186px;
  padding: 33px 28px 0;
  border-radius: 93px;
  background: rgba(255,255,255,0.93);
  box-shadow: 0 24px 90px rgba(0,0,0,0.18);
  backdrop-filter: blur(2px);
  display: flex;
}
.glass {
  position: absolute;
  inset: 0;
  border-radius: 93px;
  border: 3px solid #fff;
  overflow: hidden;
}
.glass svg {
  display: block;
}
.mint-blob {
  filter: blur(3px);
}
.glass text {
  font-size: 78px;
  fill: #fff;
  fill-opacity: 0.6;
}
.nav-item {
  position: relative;
  flex: 1;
  display: flex;
  flex-direction: column;
  align-items: center;
  font-size: 33px;
  line-height: 39px;
  font-weight: 700;
  color: #1a1a1a;
}
.nav-item svg {
  fill: none;
  stroke: #1a1a1a;
  stroke-width: 6;
  stroke-linejoin: round;
}
.nav-item svg, .nav-item span {
  position: relative;
}
.nav-item.active {
  color: #df5527;
}
.nav-item.active svg {
  fill: #df5527;
  stroke: none;
}
.nav-item.active::before {
  content: "";
  position: absolute;
  top: -21px;
  bottom: 12px;
  left: -17px;
  right: -17px;
  border-radius: 81px;
  background: #ececec;
}
```
